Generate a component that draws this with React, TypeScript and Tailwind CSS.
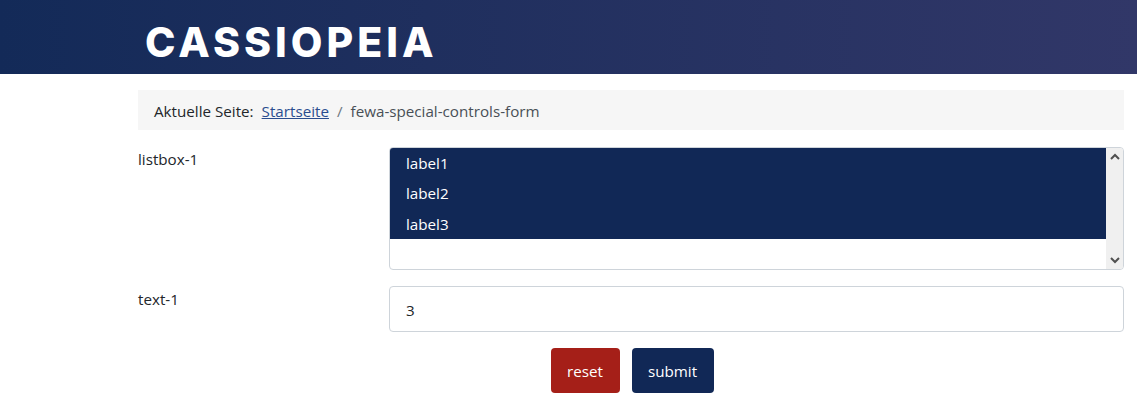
export default function App() {
  return (
    <div className="min-h-[408px] bg-white font-['Open_Sans','Noto_Sans',sans-serif] text-[15.2px] text-[#22262a]">
      {/* header */}
      <header className="h-[74px] bg-gradient-to-r from-[#132a58] to-[#313768] pl-[145px] pt-[11px] flex items-center">
        <span className="font-['Inter',sans-serif] font-extrabold text-[41px] leading-none tracking-[4px] text-white">CASSIOPEIA</span>
      </header>

      <div className="pl-[138px] pr-[13px] pt-4">
        {/* breadcrumb */}
        <div className="h-10 bg-[#f6f6f6] px-4 pt-[3px] flex items-center">
          <span className="mr-2">Aktuelle Seite:</span>
          <a href="#" className="text-[#2a4d8f] underline">Startseite</a>
          <span className="mx-2 text-[#6d757e]">/</span>
          <span className="text-[#495057]">fewa-special-controls-form</span>
        </div>

        {/* listbox */}
        <div className="flex mt-[17px]">
          <label className="w-[251px] leading-[24px]">listbox-1</label>
          <div className="flex-1 h-[123px] border border-[#ced4da] rounded flex overflow-hidden">
            <ul className="flex-1 text-white">
              <li className="h-[30px] bg-[#112856] pl-4 flex items-center">label1</li>
              <li className="h-[30px] bg-[#112856] pl-4 flex items-center">label2</li>
              <li className="h-[31px] bg-[#112856] pl-4 pt-[1px] flex items-center">label3</li>
            </ul>
            <div className="w-[17px] bg-[#f0f0f0] flex flex-col justify-between items-center py-[5px]">
              <svg width="10" height="7" viewBox="0 0 10 7" fill="none" stroke="#505050" strokeWidth="2"><path d="M1 6l4-4 4 4" /></svg>
              <svg width="10" height="7" viewBox="0 0 10 7" fill="none" stroke="#505050" strokeWidth="2"><path d="M1 1l4 4 4-4" /></svg>
            </div>
          </div>
        </div>

        {/* text input */}
        <div className="flex mt-4">
          <label className="w-[251px] leading-[26px]">text-1</label>
          <div className="flex-1 h-[46px] border border-[#ced4da] rounded pl-4 pt-[3px] flex items-center">3</div>
        </div>

        {/* buttons */}
        <div className="flex justify-center gap-3 mt-4 pl-[2px]">
          <button className="w-[69px] h-[45px] rounded bg-[#a51f18] text-white pt-[1px]">reset</button>
          <button className="w-[82px] h-[45px] rounded bg-[#112856] text-white pt-[1px]">submit</button>
        </div>
      </div>
    </div>
  );
}
